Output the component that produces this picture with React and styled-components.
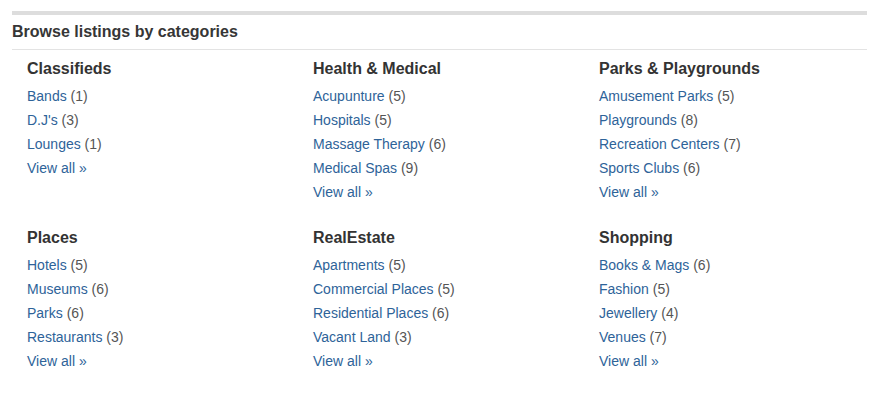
import { createGlobalStyle, styled } from "styled-components";

const GlobalStyle = createGlobalStyle`
  body {
    margin: 0;
    background: #fff;
    font-family: "Liberation Sans", Arial, sans-serif;
  }
`;

const Wrapper = styled.div`
  width: 855px;
  padding: 11px 0 0 12px;
`;

const TopBar = styled.div`
  height: 4px;
  background: #dddddd;
`;

const Header = styled.h2`
  margin: 0;
  padding: 7px 0 7px;
  font-size: 16px;
  line-height: 20px;
  font-weight: bold;
  color: #363636;
  border-bottom: 1px solid #e3e3e3;
`;

const Grid = styled.div`
  display: grid;
  grid-template-columns: repeat(3, 286px);
  row-gap: 24px;
  padding-top: 9px;
`;

const Category = styled.div`
  padding-left: 15px;
`;

const Title = styled.h3`
  margin: 0 0 5px;
  font-size: 16px;
  line-height: 20px;
  font-weight: bold;
  color: #333;
`;

const List = styled.ul`
  list-style: none;
  margin: 0;
  padding: 0;
`;

const Item = styled.li`
  font-size: 14px;
  line-height: 24px;
  color: #555;
`;

const Link = styled.a`
  color: #2e6399;
  text-decoration: none;
`;

const categories = [
  {
    title: "Classifieds",
    items: [
      ["Bands", 1],
      ["D.J's", 3],
      ["Lounges", 1],
    ],
  },
  {
    title: "Health & Medical",
    items: [
      ["Acupunture", 5],
      ["Hospitals", 5],
      ["Massage Therapy", 6],
      ["Medical Spas", 9],
    ],
  },
  {
    title: "Parks & Playgrounds",
    items: [
      ["Amusement Parks", 5],
      ["Playgrounds", 8],
      ["Recreation Centers", 7],
      ["Sports Clubs", 6],
    ],
  },
  {
    title: "Places",
    items: [
      ["Hotels", 5],
      ["Museums", 6],
      ["Parks", 6],
      ["Restaurants", 3],
    ],
  },
  {
    title: "RealEstate",
    items: [
      ["Apartments", 5],
      ["Commercial Places", 5],
      ["Residential Places", 6],
      ["Vacant Land", 3],
    ],
  },
  {
    title: "Shopping",
    items: [
      ["Books & Mags", 6],
      ["Fashion", 5],
      ["Jewellery", 4],
      ["Venues", 7],
    ],
  },
];

export default function App() {
  return (
    <>
      <GlobalStyle />
      <Wrapper>
        <TopBar />
        <Header>Browse listings by categories</Header>
        <Grid>
          {categories.map((cat) => (
            <Category key={cat.title}>
              <Title>{cat.title}</Title>
              <List>
                {cat.items.map(([name, count]) => (
                  <Item key={name}>
                    <Link href="#">{name}</Link> ({count})
                  </Item>
                ))}
                <Item>
                  <Link href="#">View all »</Link>
                </Item>
              </List>
            </Category>
          ))}
        </Grid>
      </Wrapper>
    </>
  );
}
